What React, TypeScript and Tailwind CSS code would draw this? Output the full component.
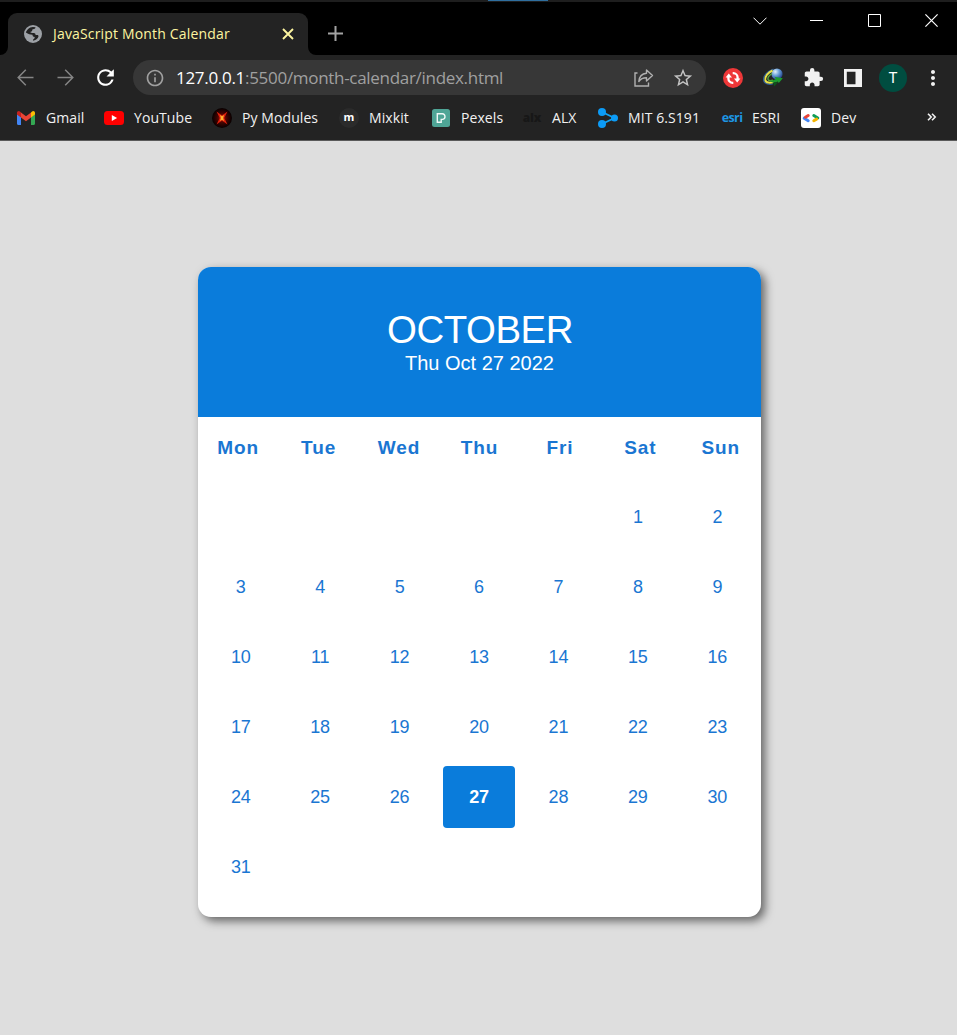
import React from "react";
import {
  MdRefresh,
  MdInfoOutline,
  MdStarOutline,
  MdExtension,
  MdMoreVert,
} from "react-icons/md";

const UI = "font-['Open_Sans','Noto_Sans',sans-serif]";

function TabStrip() {
  return (
    <div className="relative flex h-[55px] items-end bg-black">
      <div className="absolute inset-x-0 top-0 h-[2px] bg-[#1e1e1e]" />
      <div className="absolute left-[488px] top-0 h-px w-[60px] bg-[#2f6f9f]" />
      <svg width="8" height="8" viewBox="0 0 8 8" className="shrink-0">
        <path d="M8 0v8H0a8 8 0 0 0 8-8z" fill="#232323" />
      </svg>
      <div className="flex h-[42px] w-[300px] shrink-0 items-center rounded-t-[9px] bg-[#232323] pl-[16px] pr-[14px]">
        <svg width="18" height="18" viewBox="0 0 18 18" className="shrink-0">
          <circle cx="9" cy="9" r="9" fill="#9da1a6" />
          <path
            d="M11.500 2.200c-.2 1.500-1.200 1.900-2.500 2-.9.100-.8 1-.8 1.600 0 .8-1.600.7-1.800 1.300-.2.900 1.400 1 3.300 1 1.300 0 1.900.9 1.900 1.900h1.600c1 0 1.300.6 1.300 1.300-.3 1.900-2.200 3.900-5.400 4.400v-1.300c1.200-.5 1.600-1.300 1.600-2.400-1.400 0-2.200-.8-2.200-2.200-2.300 0-4.200-1-6.600-2.300C2.200 5.500 5.300 1.800 9 1.900z"
            fill="#232323"
          />
        </svg>
        <span className="ml-[11px] flex-1 whitespace-nowrap text-[14px] leading-[20px] tracking-[0.17px] text-[#fdf5a0]">
          JavaScript Month Calendar
        </span>
        <svg width="12" height="12" viewBox="0 0 12 12" stroke="#fdf5a0" strokeWidth="1.900">
          <path d="M1 1l10 10M11 1L1 11" />
        </svg>
      </div>
      <svg width="8" height="8" viewBox="0 0 8 8" className="shrink-0">
        <path d="M0 0v8h8a8 8 0 0 1-8-8z" fill="#232323" />
      </svg>
      <svg width="15" height="15" viewBox="0 0 15 15" className="mb-[14px] ml-[12px]" stroke="#a3a3a3" strokeWidth="2">
        <path d="M7.500 0v15M0 7.500h15" />
      </svg>
      <div className="ml-auto flex h-[41px] items-center self-start">
        <svg width="14" height="8" viewBox="0 0 14 8" className="mr-[43px]" fill="none" stroke="#fff">
          <path d="M.5.7L7 7.200 13.500.7" />
        </svg>
        <svg width="13" height="13" viewBox="0 0 13 13" className="mr-[45px]" stroke="#fff">
          <path d="M0 6.500h13" />
        </svg>
        <svg width="13" height="13" viewBox="0 0 13 13" className="mr-[44px]" fill="none" stroke="#fff">
          <path d="M.5.5h12v12H.5z" />
        </svg>
        <svg width="13" height="13" viewBox="0 0 13 13" className="mr-[19px]" stroke="#fff" strokeWidth="1.200">
          <path d="M.4.4l12.200 12.200M12.600.4L.4 12.600" />
        </svg>
      </div>
    </div>
  );
}

function Toolbar() {
  return (
    <div className="flex h-[45px] items-center bg-[#232323]">
      <svg width="17" height="17" viewBox="0 0 17 17" className="ml-[17px] -mt-px" fill="none" stroke="#858585" strokeWidth="1.500">
        <path d="M16.500 8.500H1.500M8.800.8L1.200 8.500l7.600 7.700" />
      </svg>
      <svg width="17" height="17" viewBox="0 0 17 17" className="ml-[23px] -mt-px" fill="none" stroke="#858585" strokeWidth="1.500">
        <path d="M.5 8.500h15M8.200.8l7.600 7.700-7.600 7.700" />
      </svg>
      <MdRefresh className="ml-[19px] size-[25px] text-white" />
      <div className="ml-[15px] flex h-[35px] w-[573px] shrink-0 items-center rounded-full bg-[#373737]">
        <MdInfoOutline className="ml-[12px] size-[20px] text-[#a0a0a0]" />
        <span className="ml-[11px] flex-1 whitespace-nowrap text-[17px] leading-[24px] tracking-[-0.3px] text-[#a0a0a0]">
          <span className="text-white">127.0.0.1</span>:5500/month-calendar/index.html
        </span>
        <svg width="20" height="18" viewBox="0 0 20 18" className="mr-[18px]" fill="none" stroke="#b0b0b0" strokeWidth="1.400">
          <path d="M3.500 4H1v13h13.500v-3.500" />
          <path d="M12.500 1l6 5.500-6 5.500V8.800C9 8.800 6.500 10 4.800 12.500 5.200 8 8 4.600 12.500 4.200z" strokeLinejoin="round" />
        </svg>
        <MdStarOutline className="mr-[12px] size-[22px] text-[#c4c4c4]" />
      </div>
      <svg width="20" height="20" viewBox="0 0 20 20" className="ml-[17px] shrink-0">
        <circle cx="10" cy="10" r="10" fill="#ee3738" />
        <g fill="none" stroke="#fff" strokeWidth="2.300">
          <path d="M5.400 9v1.500a4.300 4.300 0 0 0 4.300 4.300h.6" />
          <path d="M14.600 11V9.500a4.300 4.300 0 0 0-4.300-4.300h-.6" />
        </g>
        <path d="M2.600 9.600L5.800 5.400l3.200 4.200zM17.400 10.400l-3.200 4.200-3.200-4.200z" fill="#fff" />
      </svg>
      <svg width="20" height="19" viewBox="0 0 20 19" className="ml-[20px] shrink-0">
        <defs>
          <radialGradient id="globe" cx=".35" cy=".3" r=".75">
            <stop offset="0" stopColor="#e4f2fb" />
            <stop offset=".45" stopColor="#6ea3da" />
            <stop offset="1" stopColor="#1c3d86" />
          </radialGradient>
        </defs>
        <path d="M10.500 1C4 3.500 0 8 .6 12.200c.6 4 6 4.800 9.400 3.500" fill="none" stroke="#2e5f9c" strokeWidth="1.200" />
        <circle cx="14" cy="6" r="5.600" fill="url(#globe)" />
        <path d="M9.500 2.500C5 4.500 1.800 8.500 2.300 12c.6 3 5 3.200 8.200 1.900" fill="none" stroke="#e8e04a" strokeWidth="2" />
        <path d="M9 5.500C6 7.500 4.500 9.500 5 11.300c.5 1.500 3 1.500 5 .9" fill="none" stroke="#58a83f" strokeWidth="1.400" />
        <path d="M19.800 10.200l-8.300-1.400 1.500 2c-2 1.600-4.300 2.100-6.300 1.600 1.600 2.400 5 2.700 8 1l1.100 1.500z" fill="#1c9c2e" />
        <path d="M10 14.500l1.300 4 3.800-4.300z" fill="#0d561c" />
      </svg>
      <MdExtension className="ml-[20px] size-[21px] shrink-0 text-[#f1f1f1]" />
      <svg width="18" height="18" viewBox="0 0 18 18" className="ml-[20px] shrink-0">
        <path d="M0 0h18v18H0zM2.800 2.800v12.400h8.700V2.800z" fill="#f1f1f1" fillRule="evenodd" />
      </svg>
      <span className="ml-[17px] flex size-[28px] shrink-0 items-center justify-center rounded-full bg-[#004d40] pt-[2px] font-['Roboto',sans-serif] text-[15px] leading-none text-white">
        T
      </span>
      <MdMoreVert className="ml-[14px] size-[24px] shrink-0 text-[#f1f1f1]" />
    </div>
  );
}

const GmailIcon = () => (
  <svg width="18" height="14" viewBox="0 0 18 14">
    <path d="M0 3v9.800c0 .7.500 1.200 1.200 1.200H4V6z" fill="#4285f4" />
    <path d="M14 6v8h2.800c.7 0 1.200-.5 1.200-1.200V3z" fill="#34a853" />
    <path d="M4 1.400v5.100l5 3.800 5-3.800V1.400L9 5.200z" fill="#ea4335" />
    <path d="M14 1.400v5.100l4-3V1.900C18 .2 16-.6 14.800.8z" fill="#fbbc04" />
    <path d="M0 1.900v1.600l4 3V1.400L3.200.8C2-.6 0 .2 0 1.900z" fill="#c5221f" />
  </svg>
);

const YouTubeIcon = () => (
  <svg width="20" height="14" viewBox="0 0 20 14">
    <rect width="20" height="14" rx="3.500" fill="#f00" />
    <path d="M7.800 4v6l5.300-3z" fill="#fff" />
  </svg>
);

const PyIcon = () => (
  <svg width="20" height="20" viewBox="0 0 20 20">
    <defs>
      <radialGradient id="ember">
        <stop offset="0" stopColor="#b01206" />
        <stop offset=".5" stopColor="#400301" />
        <stop offset="1" stopColor="#060000" />
      </radialGradient>
    </defs>
    <circle cx="10" cy="10" r="10" fill="url(#ember)" />
    <path d="M4.500 3.500l5.500 4 5.500-4-3.300 6.500 3.300 6.500-5.500-4-5.500 4L7.800 10z" fill="#e0200c" />
    <path d="M8 7l2 1.300L12 7l-.8 3 .8 3-2-1.300L8 13l.8-3z" fill="#ffb632" />
  </svg>
);

const MixkitIcon = () => (
  <span className="flex size-[20px] items-center justify-center rounded-full bg-[#2b2b2b] pb-[2px] text-[11px] font-bold leading-none text-white">
    m
  </span>
);

const PexelsIcon = () => (
  <svg width="18" height="18" viewBox="0 0 18 18">
    <rect width="18" height="18" rx="2.500" fill="#4fa596" />
    <path d="M5.300 4.700h5a2.900 2.900 0 0 1 .5 5.700H9.200v2.900H5.300z" fill="none" stroke="#eef8f6" strokeWidth="1.400" />
  </svg>
);

const AlxIcon = () => (
  <span className="text-[12px] font-extrabold leading-none tracking-[-0.2px] text-[#171717]">alx</span>
);

const MitIcon = () => (
  <svg width="20" height="20" viewBox="0 0 20 20">
    <path d="M4 4l12.500 6L4 16" fill="none" stroke="#12a5f5" strokeWidth="1.800" />
    <circle cx="4" cy="4" r="4" fill="#0c9bf6" />
    <circle cx="4" cy="16" r="4" fill="#0c9bf6" />
    <circle cx="16.500" cy="10" r="3.500" fill="#0c9bf6" />
  </svg>
);

const EsriIcon = () => (
  <span className="pt-px text-[12.500px] font-bold leading-none tracking-[-0.6px] text-[#1d96e3]">esri</span>
);

const DevIcon = () => (
  <svg width="20" height="20" viewBox="0 0 20 20">
    <rect width="20" height="20" rx="3" fill="#fff" />
    <g fill="none" strokeWidth="3" strokeLinecap="round">
      <path d="M12.800 7.500l4 2.500" stroke="#0f9d58" />
      <path d="M12.800 12.700l2.800-1.600" stroke="#f4b400" />
      <path d="M3.200 10.200l4 2.500" stroke="#4285f4" />
      <path d="M4.400 9.200l2.800-1.700" stroke="#ea4335" />
    </g>
  </svg>
);

const bookmarks: { label: string; icon: React.ReactNode; size: string }[] = [
  { label: "Gmail", icon: <GmailIcon />, size: "w-[88px]" },
  { label: "YouTube", icon: <YouTubeIcon />, size: "w-[108px]" },
  { label: "Py Modules", icon: <PyIcon />, size: "w-[127px]" },
  { label: "Mixkit", icon: <MixkitIcon />, size: "w-[92px]" },
  { label: "Pexels", icon: <PexelsIcon />, size: "w-[91px]" },
  { label: "ALX", icon: <AlxIcon />, size: "w-[76px]" },
  { label: "MIT 6.S191", icon: <MitIcon />, size: "w-[124px]" },
  { label: "ESRI", icon: <EsriIcon />, size: "w-[79px]" },
  { label: "Dev", icon: <DevIcon />, size: "w-[79px]" },
];

function BookmarksBar() {
  return (
    <div className="flex h-[41px] items-center border-b border-[#5a5a5a] bg-[#232323] pb-[5px] pl-[16px] pr-[20px]">
      {bookmarks.map((b) => (
        <div key={b.label} className={`flex shrink-0 items-center gap-[10px] ${b.size}`}>
          <span className="flex w-[20px] shrink-0 justify-center">{b.icon}</span>
          <span className="whitespace-nowrap text-[14px] leading-[20px] tracking-[0.08px] text-[#f1f1f1]">{b.label}</span>
        </div>
      ))}
      <svg width="10" height="8" viewBox="0 0 10 8" className="mb-[2px] ml-auto" fill="none" stroke="#f1f1f1" strokeWidth="1.600">
        <path d="M1 .7L4.200 4 1 7.300M5 .7L8.200 4 5 7.300" />
      </svg>
    </div>
  );
}

const weekdays = ["Mon", "Tue", "Wed", "Thu", "Fri", "Sat", "Sun"];
const leadingBlanks = 5;
const today = 27;
const cells: (number | null)[] = [
  ...Array.from({ length: leadingBlanks }, () => null),
  ...Array.from({ length: 31 }, (_, i) => i + 1),
];

function Calendar() {
  return (
    <div className="h-[650px] w-[563px] overflow-hidden rounded-[13px] bg-white font-['Liberation_Sans',Arial,sans-serif] text-[#1a76d2] shadow-[4px_4px_10px_0px_rgba(0,0,0,0.55)]">
      <div className="flex h-[150px] flex-col items-center justify-center bg-[#0a7cdb] text-white">
        <h1 className="mt-px pl-px text-[38.400px] leading-[40px] tracking-[-0.45px]">OCTOBER</h1>
        <p className="text-[20px] leading-[26px]">Thu Oct 27 2022</p>
      </div>
      <div className="grid h-[62px] grid-cols-7 items-center pt-px text-center text-[19px] font-bold tracking-[0.900px]">
        {weekdays.map((d) => (
          <div key={d}>{d}</div>
        ))}
      </div>
      <div className="ml-[3px] mt-[3px] grid w-[556px] grid-cols-7 text-center text-[18px]">
        {cells.map((day, i) => (
          <div
            key={i}
            className={
              day === today
                ? "m-[4px] flex h-[62px] items-center justify-center rounded-[4px] bg-[#0a7cdb] font-bold tracking-[-0.3px] text-white"
                : "m-[4px] flex h-[62px] items-center justify-center tracking-[-0.2px]"
            }
          >
            {day}
          </div>
        ))}
      </div>
    </div>
  );
}

export default function App() {
  return (
    <div className={`flex h-[1035px] w-[957px] flex-col overflow-hidden bg-[#dedede] ${UI}`}>
      <TabStrip />
      <Toolbar />
      <BookmarksBar />
      <main className="flex justify-center pl-[2px] pt-[126px]">
        <Calendar />
      </main>
    </div>
  );
}
